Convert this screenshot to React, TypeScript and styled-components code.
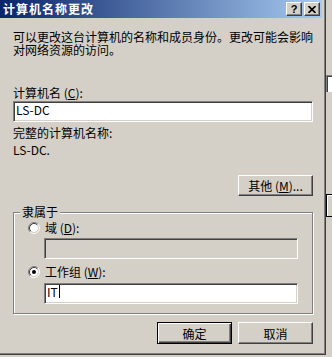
import React from 'react';
import styled, { createGlobalStyle, css } from 'styled-components';

const GlobalStyle = createGlobalStyle`
  html, body {
    margin: 0;
    padding: 0;
    background: #d4d0c8;
  }
  body {
    font-family: "Noto Sans CJK SC", "DejaVu Sans", sans-serif;
    font-size: 12px;
    line-height: 13px;
    color: #000;
  }
`;

const Screen = styled.div`
  width: 332px;
  height: 357px;
  display: flex;
  align-items: flex-start;
  overflow: hidden;
`;

const Window = styled.div`
  width: 326px;
  height: 355px;
  box-sizing: border-box;
  flex-shrink: 0;
  border-right: 1px solid #404040;
  border-bottom: 1px solid #404040;
`;

const Frame = styled.div`
  height: 100%;
  box-sizing: border-box;
  border-right: 1px solid #808080;
  border-bottom: 1px solid #808080;
  padding: 0 2px 2px 0;
  background: #d4d0c8;
  display: flex;
  flex-direction: column;
`;

const TitleBar = styled.div`
  height: 18px;
  flex-shrink: 0;
  margin-bottom: 1px;
  display: flex;
  align-items: center;
  padding: 0 2px 0 3px;
  background: linear-gradient(to right, #0a246a, #a6caf0);
`;

const Title = styled.div`
  flex: 1;
  color: #fff;
  font-weight: bold;
  font-size: 12px;
  letter-spacing: 1px;
  line-height: 14px;
`;

const bevel = css`
  background: #d4d0c8;
  box-sizing: border-box;
  border: 1px solid;
  border-color: #fff #404040 #404040 #fff;
  box-shadow: inset -1px -1px #808080;
`;

const CaptionButton = styled.div<{ $gap?: boolean }>`
  ${bevel};
  width: 16px;
  height: 14px;
  margin-left: ${(p) => (p.$gap ? '2px' : '0')};
  display: flex;
  align-items: center;
  justify-content: center;
  font-family: "Liberation Sans", Arial, sans-serif;
  font-weight: bold;
  font-size: 11px;
  line-height: 11px;
`;

const Body = styled.div`
  flex: 1;
  display: flex;
  flex-direction: column;
  padding: 11px 9px 0 13px;
`;

const Text = styled.div<{ $mt?: number }>`
  margin-top: ${(p) => p.$mt ?? 0}px;
  white-space: nowrap;
`;

const Intro = styled.div`
  width: 300px;
`;

const Field = styled.div<{ $mt?: number; $disabled?: boolean; $inset?: number }>`
  height: 21px;
  box-sizing: border-box;
  margin-top: ${(p) => p.$mt ?? 0}px;
  margin-left: ${(p) => p.$inset ?? 0}px;
  padding: 1px 2px;
  border: 1px solid;
  border-color: #808080 #fff #fff #808080;
  box-shadow: inset 1px 1px #404040, inset -1px -1px #d4d0c8;
  background: ${(p) => (p.$disabled ? '#d4d0c8' : '#fff')};
  display: flex;
  align-items: flex-start;
  white-space: nowrap;
`;

const Caret = styled.span`
  display: inline-block;
  width: 1px;
  height: 13px;
  margin-left: 1px;
  background: #000;
`;

const PushButton = styled.div<{ $default?: boolean; $mt?: number }>`
  ${bevel};
  width: 75px;
  height: 22px;
  margin-top: ${(p) => p.$mt ?? 0}px;
  display: flex;
  align-items: center;
  justify-content: center;
  white-space: nowrap;
  ${(p) =>
    p.$default &&
    css`
      border: 1px solid #000;
      box-shadow: inset 1px 1px #fff, inset -1px -1px #404040, inset -2px -2px #808080;
    `}
`;

const OtherButton = styled(PushButton)`
  align-self: flex-end;
  height: 21px;
`;

const GroupBox = styled.div`
  position: relative;
  margin-top: 16px;
  height: 102px;
  box-sizing: border-box;
  border: 1px solid #808080;
  box-shadow: inset 1px 1px #fff, 1px 1px #fff;
  padding: 8px 14px 0 14px;
  display: flex;
  flex-direction: column;
`;

const GroupCaption = styled.div`
  position: absolute;
  top: -8px;
  left: 6px;
  padding: 0 2px;
  background: #d4d0c8;
`;

const RadioRow = styled.div<{ $mt?: number }>`
  margin-top: ${(p) => p.$mt ?? 0}px;
  height: 13px;
  display: flex;
  align-items: center;
  gap: 5px;
  white-space: nowrap;
`;

const ButtonRow = styled.div`
  margin-top: 8px;
  display: flex;
  justify-content: flex-end;
  gap: 6px;
`;

const Backdrop = styled.div`
  flex: 1;
  align-self: stretch;
  display: flex;
  flex-direction: column;
  background: #d4d0c8;
`;

const EdgeField = styled.div`
  margin-top: 75px;
  height: 16px;
  border-left: 1px solid #808080;
  border-top: 1px solid #808080;
  background: #fff;
  box-shadow: inset 1px 1px #404040;
`;

const EdgeButton = styled.div`
  margin-top: 102px;
  height: 23px;
  box-sizing: border-box;
  border: 1px solid #000;
  border-right: none;
  box-shadow: inset 1px 1px #fff;
`;

const Radio = ({ checked }: { checked?: boolean }) => (
  <svg width="12" height="12" viewBox="0 0 12 12">
    <circle cx="6" cy="6" r="4" fill="#fff" />
    <path d="M2.11 9.89 A5.5 5.5 0 0 1 9.89 2.11" stroke="#808080" fill="none" />
    <path d="M9.89 2.11 A5.5 5.5 0 0 1 2.11 9.89" stroke="#fff" fill="none" />
    <path d="M2.82 9.18 A4.5 4.5 0 0 1 9.18 2.82" stroke="#404040" fill="none" />
    <path d="M9.18 2.82 A4.5 4.5 0 0 1 2.82 9.18" stroke="#d4d0c8" fill="none" />
    {checked && <circle cx="6" cy="6" r="2" fill="#000" />}
  </svg>
);

const CloseGlyph = () => (
  <svg width="8" height="7" viewBox="0 0 8 7">
    <path d="M0.5 0 L7.5 7 M7.5 0 L0.5 7" stroke="#000" strokeWidth="1.6" fill="none" />
  </svg>
);

export default function App() {
  return (
    <>
      <GlobalStyle />
      <Screen>
        <Window>
          <Frame>
            <TitleBar>
              <Title>计算机名称更改</Title>
              <CaptionButton>?</CaptionButton>
              <CaptionButton $gap>
                <CloseGlyph />
              </CaptionButton>
            </TitleBar>
            <Body>
              <Intro>可以更改这台计算机的名称和成员身份。更改可能会影响对网络资源的访问。</Intro>
              <Text $mt={30}>
                计算机名 (<u>C</u>):
              </Text>
              <Field $mt={2}>LS-DC</Field>
              <Text $mt={4}>完整的计算机名称:</Text>
              <Text $mt={4}>LS-DC.</Text>
              <OtherButton $mt={19}>
                其他 (<u>M</u>)...
              </OtherButton>
              <GroupBox>
                <GroupCaption>隶属于</GroupCaption>
                <RadioRow>
                  <Radio />
                  <span>
                    域 (<u>D</u>):
                  </span>
                </RadioRow>
                <Field $mt={4} $inset={16} $disabled />
                <RadioRow $mt={6}>
                  <Radio checked />
                  <span>
                    工作组 (<u>W</u>):
                  </span>
                </RadioRow>
                <Field $mt={5} $inset={16}>
                  IT
                  <Caret />
                </Field>
              </GroupBox>
              <ButtonRow>
                <PushButton $default>确定</PushButton>
                <PushButton>取消</PushButton>
              </ButtonRow>
            </Body>
          </Frame>
        </Window>
        <Backdrop>
          <EdgeField />
          <EdgeButton />
        </Backdrop>
      </Screen>
    </>
  );
}
